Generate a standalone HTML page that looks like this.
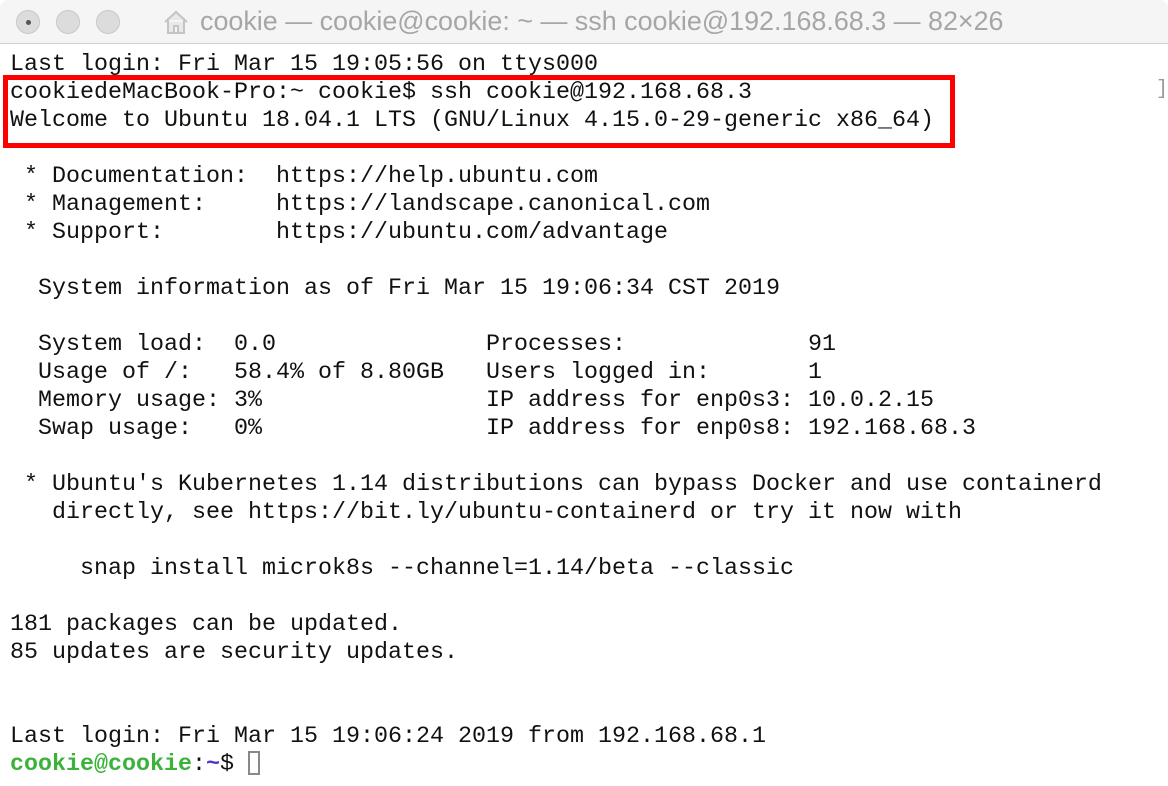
<!DOCTYPE html>
<html><head><meta charset="utf-8"><style>
body{margin:0;width:1168px;height:786px;background:#fff;overflow:hidden;position:relative;font-family:"Liberation Mono",monospace}
.tb{position:absolute;left:0;top:0;width:1168px;height:43px;background:#f5f5f5;border-bottom:1px solid #d0d0d0;border-radius:8px 8px 0 0}
.c{position:absolute;top:10px;width:24px;height:24px;border-radius:50%;background:#dcdcdc;border:1px solid #c8c8c8;box-sizing:border-box}
.title{position:absolute;left:200px;top:6px;font-family:"Liberation Sans",sans-serif;font-size:26.9px;color:#a6a6a6;white-space:nowrap}
pre{position:absolute;left:10px;top:51px;margin:0;font-family:"Liberation Mono",monospace;font-size:23.33px;line-height:28px;color:#111}
.box{position:absolute;left:3px;top:75px;width:952px;height:73px;border:5px solid #f00;box-sizing:border-box}
.g{color:#3bb33b;font-weight:bold}.b{color:#5533cc;font-weight:bold}
.cur{display:inline-block;width:12px;height:24px;border:2px solid #888;vertical-align:-5px;box-sizing:border-box}
</style></head><body>
<div class="tb">
<div class="c" style="left:16px"><div style="position:absolute;left:8.5px;top:8.5px;width:5px;height:5px;border-radius:50%;background:#555"></div></div>
<div class="c" style="left:56px"></div>
<div class="c" style="left:96px"></div>
<svg style="position:absolute;left:163px;top:9px" width="26" height="26" viewBox="0 0 26 26"><path d="M2 13 L13 3 L24 13 M5 11 V24 H21 V11 M11 24 V17 H15 V24" fill="#e8e8e8" stroke="#c4c4c4" stroke-width="2"/></svg>
<div class="title">cookie — cookie@cookie: ~ — ssh cookie@192.168.68.3 — 82×26</div>
</div>
<div class="box"></div>
<div style="position:absolute;left:1156px;top:78px;font-size:20px;color:#999">]</div>
<pre>Last login: Fri Mar 15 19:05:56 on ttys000
cookiedeMacBook-Pro:~ cookie$ ssh cookie@192.168.68.3
Welcome to Ubuntu 18.04.1 LTS (GNU/Linux 4.15.0-29-generic x86_64)

 * Documentation:  https://help.ubuntu.com
 * Management:     https://landscape.canonical.com
 * Support:        https://ubuntu.com/advantage

  System information as of Fri Mar 15 19:06:34 CST 2019

  System load:  0.0               Processes:             91
  Usage of /:   58.4% of 8.80GB   Users logged in:       1
  Memory usage: 3%                IP address for enp0s3: 10.0.2.15
  Swap usage:   0%                IP address for enp0s8: 192.168.68.3

 * Ubuntu's Kubernetes 1.14 distributions can bypass Docker and use containerd
   directly, see https://bit.ly/ubuntu-containerd or try it now with

     snap install microk8s --channel=1.14/beta --classic

181 packages can be updated.
85 updates are security updates.


Last login: Fri Mar 15 19:06:24 2019 from 192.168.68.1
<span class="g">cookie@cookie</span>:<span class="b">~</span>$ <span class="cur"></span></pre>
</body></html>
